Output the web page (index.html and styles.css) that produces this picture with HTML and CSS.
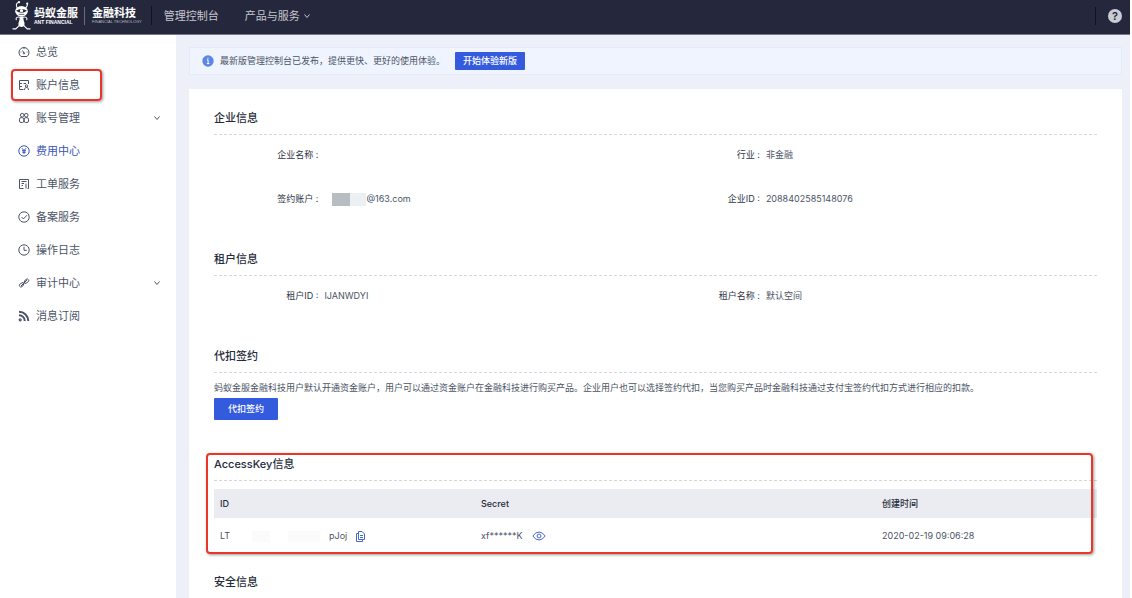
FILE: index.html
```
<!DOCTYPE html>
<html lang="zh-CN">
<head>
<meta charset="utf-8">
<title>账户信息</title>
<link rel="stylesheet" href="styles.css">
</head>
<body>
<header class="topbar">
  <a class="brand" href="#">
    <svg class="brand-ant" viewBox="0 0 22 32" fill="none" stroke="#fff" stroke-width="1.100" stroke-linecap="round">
      <path d="M6.500 8C4.800 5.500 5.500 3 8 2.200M15.500 8C17.200 6 17.500 4.500 17 3.500"/>
      <circle cx="8.400" cy="2" r="1.100" fill="#fff" stroke="none"/><circle cx="17" cy="3.500" r="1.100" fill="#fff" stroke="none"/>
      <ellipse cx="11" cy="11.500" rx="6.600" ry="5.500" fill="#fff" stroke="none"/>
      <path d="M5.200 11Q11 7.400 16.800 11Q11 15 5.200 11Z" fill="#25283c" stroke="none"/>
      <circle cx="11" cy="11" r="1.700" fill="#fff" stroke="none"/>
      <path d="M8.500 14.800h5" stroke="#25283c" stroke-width=".7"/>
      <path d="M10 18C7 17 4.500 18 5.500 20.500M12 18C15 17 17.500 18 16.500 20.500"/>
      <path d="M9.500 17h3l1 5c1.500 3 .6 6-2.500 6S7 25 8.500 22Z" fill="#fff" stroke="none"/>
      <path d="M8.500 26.500 5 30H2M13.500 26.500l3.500 3.500H20"/>
    </svg>
    <span class="brand-part"><span class="brand-name">蚂蚁金服</span><span class="brand-sub">ANT FINANCIAL</span></span>
    <span class="brand-part brand-part-tech"><span class="brand-name">金融科技</span><span class="brand-sub brand-sub-tech">FINANCIAL TECHNOLOGY</span></span>
  </a>
  <nav class="topnav">
    <a href="#">管理控制台</a>
    <button type="button">产品与服务
      <svg class="chevron" viewBox="0 0 6 6"><path d="M.5 1.500 3 4.500l2.500-3"/></svg>
    </button>
  </nav>
  <div class="help-area">
    <button type="button" class="help" aria-label="帮助">?</button>
  </div>
</header>

<div class="layout">
  <nav class="sidebar">
    <a href="#"><svg class="icon" viewBox="0 0 12 12"><path d="M3 10.500A5 5 0 1 1 9 10.500ZM6 7 4.500 4.500M6 2v1M2.500 6h.8M8.700 6h.8"/><circle cx="6" cy="7.300" r=".7"/></svg>总览</a>
    <a href="#" class="marked"><svg class="icon" viewBox="0 0 12 12"><path d="M5.500 10.500H1.500V1.500h9V5M1.500 4.500H4M1.500 7.500H4M5.500 4.500H8"/><circle cx="8.500" cy="7" r="1.200"/><path d="M6.500 11c0-1.600.8-2.500 2-2.500s2 .9 2 2.500"/></svg>账户信息</a>
    <a href="#"><svg class="icon" viewBox="0 0 12 12"><circle cx="4.200" cy="3.200" r="1.800"/><circle cx="8.200" cy="3.200" r="1.800"/><rect x="1.500" y="5.700" width="4.300" height="4.800" rx="1.500"/><rect x="6.200" y="5.700" width="4.300" height="4.800" rx="1.500"/></svg>账号管理<svg class="chevron" viewBox="0 0 6 6"><path d="M.5 1.500 3 4.500l2.500-3"/></svg></a>
    <a href="#" class="current"><svg class="icon" viewBox="0 0 12 12"><circle cx="6" cy="6" r="5.200"/><path d="M4 3.200l2 2.300 2-2.300M6 5.500v3.500M4 5.700h4M4.300 7.300h3.400"/></svg>费用中心</a>
    <a href="#"><svg class="icon" viewBox="0 0 12 12"><path d="M5.500 10.500H1.500v-9h9v9H9.500M3.500 3.500h5M3.500 5.500H6M3.500 7.500h1.500M8 5.500v5"/></svg>工单服务</a>
    <a href="#"><svg class="icon" viewBox="0 0 12 12"><circle cx="6" cy="6" r="5.200"/><path d="M3.500 6l1.900 1.900L9 4.200"/></svg>备案服务</a>
    <a href="#"><svg class="icon" viewBox="0 0 12 12"><circle cx="6" cy="6" r="5.200"/><path d="M6 2.800v3.500h2.800"/></svg>操作日志</a>
    <a href="#"><svg class="icon" viewBox="0 0 12 12"><path d="M6 5.500 7.200 3l2-1.200L11 3.500 9.500 5.500 7 6.500ZM6 6.500 4.800 9l-2 1.200L1 8.500 2.500 6.500 5 5.500ZM3 9l6-6"/></svg>审计中心<svg class="chevron" viewBox="0 0 6 6"><path d="M.5 1.500 3 4.500l2.500-3"/></svg></a>
    <a href="#"><svg class="icon icon-feed" viewBox="0 0 12 12"><path d="M1 1.700a9.300 9.300 0 0 1 9.300 9.300M1 5.200a5.800 5.800 0 0 1 5.800 5.800"/><circle cx="2.200" cy="9.800" r=".6"/></svg>消息订阅</a>
  </nav>

  <main class="content">
    <div class="notice">
      <svg class="notice-icon" viewBox="0 0 12 12"><circle cx="6" cy="6" r="5.700" fill="#5c86e6"/><path d="M4.900 4.900h1.200v3.600M4.800 8.600h2.600M6 2.700v1.100" fill="none" stroke="#fff"/></svg>
      <span>最新版管理控制台已发布，提供更快、更好的使用体验。</span>
      <button type="button" class="btn btn-small">开始体验新版</button>
    </div>

    <div class="card">
      <section>
        <h2>企业信息</h2>
        <dl class="info">
          <div><dt>企业名称 :</dt><dd></dd></div>
          <div><dt>行业 :</dt><dd>非金融</dd></div>
          <div><dt>签约账户 :</dt><dd><span class="mask"></span>@163.com</dd></div>
          <div><dt>企业ID :</dt><dd>2088402585148076</dd></div>
        </dl>
      </section>

      <section>
        <h2>租户信息</h2>
        <dl class="info">
          <div><dt>租户ID :</dt><dd>IJANWDYI</dd></div>
          <div><dt>租户名称 :</dt><dd>默认空间</dd></div>
        </dl>
      </section>

      <section class="signing">
        <h2>代扣签约</h2>
        <p>蚂蚁金服金融科技用户默认开通资金账户，用户可以通过资金账户在金融科技进行购买产品。企业用户也可以选择签约代扣，当您购买产品时金融科技通过支付宝签约代扣方式进行相应的扣款。</p>
        <button type="button" class="btn">代扣签约</button>
      </section>

      <section class="keys">
        <h2>AccessKey信息</h2>
        <table>
          <colgroup><col class="col-id"><col class="col-secret"><col></colgroup>
          <thead><tr><th scope="col">ID</th><th scope="col">Secret</th><th scope="col">创建时间</th></tr></thead>
          <tbody><tr>
            <td><span class="cell"><span class="key-start">LT<span class="key-mask"></span></span>pJoj
              <button type="button" class="icon-btn" aria-label="复制"><svg class="copy" viewBox="0 0 9 11"><path d="M2.500.5h3.500l2.500 2.500v5.500h-6ZM2.500 2.500h-2v8h6v-2M4 4.500h3M4 6.500h3"/></svg></button></span></td>
            <td><span class="cell">xf******K
              <button type="button" class="icon-btn" aria-label="显示"><svg class="eye" viewBox="0 0 14 10"><path d="M.8 5Q3.500 1 7 1t6.200 4Q10.500 9 7 9T.8 5Z"/><circle cx="7" cy="5" r="1.900"/></svg></button></span></td>
            <td>2020-02-19 09:06:28</td>
          </tr></tbody>
        </table>
      </section>

      <section>
        <h2>安全信息</h2>
      </section>
    </div>
  </main>
</div>
</body>
</html>
```
FILE: styles.css
```
* { box-sizing: border-box; }

html { overflow: hidden; background: #fff; }

body {
  display: flex;
  flex-direction: column;
  min-height: 100vh;
  margin: 0;
  padding-right: 2px;
  color: #4b5466;
  font: 9px/16px Inter, "Noto Sans CJK SC", sans-serif;
}

a { color: inherit; text-decoration: none; }

button {
  padding: 0;
  border: 0;
  background: none;
  color: inherit;
  font: inherit;
}

svg { flex: none; }

.topbar {
  display: flex;
  align-items: center;
  height: 35px;
  padding: 0 8px 3px 11px;
  border-bottom: 1px solid #777788;
  background: #25283c;
  color: #c5c7cf;
  font-size: 11px;
}

.brand { display: flex; align-items: center; color: #fff; }
.brand-ant { width: 21px; height: 31px; margin-right: 2px; }
.brand-part { display: flex; flex-direction: column; }
.brand-part-tech { margin-left: 6px; padding-left: 7px; border-left: 1px solid #696b79; }
.brand-name { font-weight: 700; line-height: 12px; }
.brand-sub { font: 700 5px/6px "Liberation Sans", sans-serif; }
.brand-sub-tech { color: #b6b8c2; font-size: 4px; font-weight: 400; }

.topnav {
  display: flex;
  align-items: center;
  gap: 26px;
  height: 19px;
  margin-left: 9px;
  padding-left: 12px;
  border-left: 1px solid #11131f;
}
.topnav button { display: flex; align-items: center; gap: 4px; }

.help-area { margin-left: auto; padding-left: 12px; border-left: 1px solid #11131f; }
.help {
  display: block;
  width: 14px;
  height: 14px;
  margin: 2px 0;
  border-radius: 50%;
  background: #c9ccd3;
  color: #25283c;
  font-size: 11px;
  font-weight: 600;
  line-height: 14px;
}

.chevron { width: 6px; height: 6px; fill: none; stroke: currentColor; }

.layout { display: flex; flex: 1; }

.sidebar { flex: none; width: 176px; background: #fff; font-size: 11px; }
.sidebar a {
  position: relative;
  display: flex;
  align-items: center;
  gap: 6px;
  height: 33px;
  padding: 0 16px 0 18px;
}
.sidebar .current { color: #3955b5; }
.sidebar .chevron { margin-left: auto; }
.icon { width: 12px; height: 12px; fill: none; stroke: currentColor; stroke-width: 1; }
.icon-feed { stroke-width: 2; }

.marked::after,
.keys::after {
  content: "";
  position: absolute;
  border: 2px solid #ea3529;
  border-radius: 4px;
  box-shadow: 1px 1px 3px rgba(0, 0, 0, .4);
  pointer-events: none;
}
.marked::after { inset: 1px 74px 0 11px; }
.keys::after { inset: -3px 4px 0 -8px; }

.content {
  display: flex;
  flex: 1;
  flex-direction: column;
  gap: 14px;
  min-width: 0;
  padding: 12px 8px 0 13px;
  background: #edf0f8;
}

.notice {
  display: flex;
  align-items: center;
  height: 28px;
  padding: 0 12px;
  border: 1px solid #e5eafa;
  background: #f0f4ff;
}
.notice-icon { width: 12px; height: 12px; margin-right: 6px; }

.btn {
  height: 22px;
  padding: 0 14px;
  border-radius: 1px;
  background: #345bde;
  color: #fff;
  font-weight: 500;
}
.btn-small { height: 18px; margin-left: 10px; padding: 0 8px; }

.card { flex: 1; padding: 21px 25px 0; background: #fff; }

h2 {
  margin: 0;
  padding-bottom: 8px;
  border-bottom: 1px dashed #d5d7dc;
  color: #252b3a;
  font-size: 11px;
  font-weight: 500;
  line-height: 16px;
}

.info {
  display: grid;
  grid-template-columns: 1fr 1fr;
  row-gap: 28px;
  margin: 0;
  padding: 12px 0 44px;
}
.info div { display: flex; height: 16px; }
.info dt { width: 25%; padding-right: 6px; color: #2f3646; text-align: right; }
.info dd { display: flex; align-items: center; margin: 0; }
.mask {
  width: 34px;
  height: 13px;
  margin-left: 8px;
  background: linear-gradient(90deg, #b7bec2 54%, #eaf0f4 54%);
}

.signing { padding-bottom: 36px; }
.signing p { margin: 7px 0 2px; }
.signing .btn { display: block; }

.keys { position: relative; margin-bottom: 20px; }
table { width: 100%; margin-top: 8px; border-collapse: collapse; table-layout: fixed; }
th, td { padding: 0 6px; text-align: left; }
th { height: 29px; background: #ebecf1; color: #252b3a; font-weight: 500; }
td { height: 36px; }
.col-id { width: 261px; }
.col-secret { width: 401px; }
.cell { display: flex; align-items: center; gap: 9px; }
.key-start { display: flex; align-items: center; justify-content: space-between; width: 100px; }
.key-mask {
  width: 68px;
  height: 11px;
  background: linear-gradient(90deg, #fbfbfb 26%, #fff 26%, #fff 53%, #fbfbfb 53%);
}
.icon-btn { display: flex; color: #4769c7; }
.icon-btn svg { fill: none; stroke: currentColor; }
.copy { width: 9px; height: 11px; }
.eye { width: 14px; height: 10px; }
```
